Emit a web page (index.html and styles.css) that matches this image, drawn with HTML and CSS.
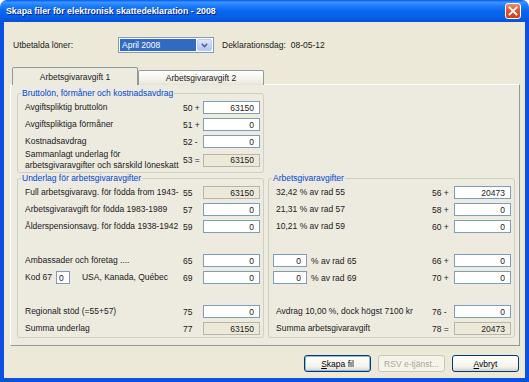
FILE: index.html
```html
<!DOCTYPE html>
<html lang="sv">
<head>
    <meta charset="UTF-8">
    <meta name="viewport" content="width=device-width, initial-scale=1.0">
    <title>Skapa filer för elektronisk skattedeklaration - 2008</title>
    <link rel="stylesheet" href="styles.css">
</head>
<body>
    <div class="window">
        <div class="titlebar">
            <span class="title">Skapa filer för elektronisk skattedeklaration - 2008</span>
            <button class="close">
                <svg width="10" height="10" viewBox="0 0 10 10"><path d="M1.5 1.5 L8.5 8.5 M8.5 1.5 L1.5 8.5" stroke="#fff" stroke-width="1.8" stroke-linecap="square"/></svg>
            </button>
        </div>

        <div class="client">
            <div class="toprow">
                <span class="top-label">Utbetalda löner:</span>
                <div class="combo">
                    <span class="combo-value">April 2008</span>
                    <span class="combo-arrow">
                        <svg width="7" height="5" viewBox="0 0 7 5"><path d="M0.8 0.8 L3.5 3.6 L6.2 0.8" fill="none" stroke="#4d6185" stroke-width="1.5"/></svg>
                    </span>
                </div>
                <span class="decl">Deklarationsdag:</span>
                <span class="decl-date">08-05-12</span>
            </div>

            <div class="tabs">
                <div class="tab active">Arbetsgivaravgift 1</div>
                <div class="tab">Arbetsgivaravgift 2</div>
            </div>

            <div class="panel">
                <fieldset class="group group-top">
                    <legend>Bruttolön, förmåner och kostnadsavdrag</legend>
                    <div class="row"><span class="lbl">Avgiftspliktig bruttolön</span><span class="num">50 +</span><input class="field" value="63150"></div>
                    <div class="row"><span class="lbl">Avgiftspliktiga förmåner</span><span class="num">51 +</span><input class="field" value="0"></div>
                    <div class="row"><span class="lbl">Kostnadsavdrag</span><span class="num">52 -</span><input class="field" value="0"></div>
                    <div class="row tall"><span class="lbl">Sammanlagt underlag för<br>arbetsgivaravgifter och särskild löneskatt</span><span class="num">53 =</span><input class="field readonly" value="63150" readonly></div>
                </fieldset>

                <fieldset class="group group-left">
                    <legend>Underlag för arbetsgivaravgifter</legend>
                    <div class="row"><span class="lbl">Full arbetsgivaravg. för födda from 1943-</span><span class="num">55</span><input class="field readonly" value="63150" readonly></div>
                    <div class="row"><span class="lbl">Arbetsgivaravgift för födda 1983-1989</span><span class="num">57</span><input class="field" value="0"></div>
                    <div class="row"><span class="lbl">Ålderspensionsavg. för födda 1938-1942</span><span class="num">59</span><input class="field" value="0"></div>
                    <div class="row"></div>
                    <div class="row"><span class="lbl">Ambassader och företag ....</span><span class="num">65</span><input class="field" value="0"></div>
                    <div class="row"><span class="lbl">Kod 67<input class="kod" value="0"><span class="kod-text">USA, Kanada, Québec</span></span><span class="num">69</span><input class="field" value="0"></div>
                    <div class="row"></div>
                    <div class="row"><span class="lbl">Regionalt stöd (=55+57)</span><span class="num">75</span><input class="field" value="0"></div>
                    <div class="row"><span class="lbl">Summa underlag</span><span class="num">77</span><input class="field readonly" value="63150" readonly></div>
                </fieldset>

                <fieldset class="group group-right">
                    <legend>Arbetsgivaravgifter</legend>
                    <div class="row"><span class="lbl">32,42 % av rad 55</span><span class="num">56 +</span><input class="field" value="20473"></div>
                    <div class="row"><span class="lbl">21,31 % av rad 57</span><span class="num">58 +</span><input class="field" value="0"></div>
                    <div class="row"><span class="lbl">10,21 % av rad 59</span><span class="num">60 +</span><input class="field" value="0"></div>
                    <div class="row"></div>
                    <div class="row"><span class="pct"><input class="pct-field" value="0">% av rad 65</span><span class="num">66 +</span><input class="field" value="0"></div>
                    <div class="row"><span class="pct"><input class="pct-field" value="0">% av rad 69</span><span class="num">70 +</span><input class="field" value="0"></div>
                    <div class="row"></div>
                    <div class="row"><span class="lbl">Avdrag 10,00 %, dock högst 7100 kr</span><span class="num">76 -</span><input class="field" value="0"></div>
                    <div class="row"><span class="lbl">Summa arbetsgivaravgift</span><span class="num">78 =</span><input class="field readonly" value="20473" readonly></div>
                </fieldset>
            </div>

            <div class="buttons">
                <button class="btn default"><u>S</u>kapa fil</button>
                <button class="btn" disabled>RSV e-tjänst...</button>
                <button class="btn"><u>A</u>vbryt</button>
            </div>
        </div>
    </div>
</body>
</html>
```

FILE: styles.css
```css
* {
    box-sizing: border-box;
}

body {
    margin: 0;
    font-family: "Liberation Sans", Arial, sans-serif;
    font-size: 8.5px;
    color: #1a1a1a;
    background: #fff;
}

.window {
    width: 529px;
    height: 382px;
    display: flex;
    flex-direction: column;
}

/* title bar */
.titlebar {
    height: 22px;
    flex: none;
    display: flex;
    align-items: center;
    justify-content: space-between;
    padding: 0 8px 0 6px;
    border-radius: 7px 7px 0 0;
    background: linear-gradient(to bottom, #0058ee 0%, #3d95ff 10%, #1d7ffc 25%, #0a66ef 50%, #0560ea 75%, #0a4fd8 100%);
}

.title {
    color: #fff;
    font-weight: bold;
    font-size: 8.8px;
    text-shadow: 1px 1px #0a1883;
}

.close {
    width: 16px;
    height: 16px;
    padding: 0;
    display: flex;
    align-items: center;
    justify-content: center;
    border: 1px solid #fff;
    border-radius: 3px;
    background: linear-gradient(to bottom, #ec8e6e, #e2552f 45%, #c9401b);
}

/* dialog client area */
.client {
    flex: 1;
    background: #ece9d8;
    border: 4px solid #0d4fe3;
    border-top: 0;
    padding: 15px 5px 0 6px;
}

.toprow {
    height: 16px;
    display: flex;
    align-items: center;
    padding-left: 3px;
}

.top-label {
    width: 105px;
}

.combo {
    width: 96px;
    height: 16px;
    display: flex;
    border: 1px solid #7f9db9;
    background: #fff;
    padding: 1px;
}

.combo-value {
    flex: 1;
    background: #316ac5;
    color: #fff;
    padding-left: 2px;
    line-height: 12px;
}

.combo-arrow {
    width: 15px;
    margin-left: 1px;
    display: flex;
    align-items: center;
    justify-content: center;
    border: 1px solid #b9cbf3;
    border-radius: 2px;
    background: linear-gradient(to bottom, #dce7fd, #c1d3fb 60%, #b1c5f4);
}

.decl {
    margin-left: 8px;
}

.decl-date {
    margin-left: 5px;
}

/* tabs */
.tabs {
    height: 18px;
    margin-top: 14px;
    margin-bottom: -1px;
    padding-left: 2px;
    display: flex;
    align-items: flex-end;
}

.tab {
    width: 126px;
    height: 15px;
    display: flex;
    align-items: center;
    justify-content: center;
    border: 1px solid #919b9c;
    border-bottom: 0;
    border-radius: 2px 2px 0 0;
    background: linear-gradient(to bottom, #fff, #f0efe8 70%, #e6e4da);
}

.tab.active {
    height: 18px;
    position: relative;
    z-index: 1;
    background: #edeae0;
}

.panel {
    display: grid;
    grid-template-columns: 247px 247px;
    grid-template-rows: auto auto;
    column-gap: 4px;
    padding: 3px 4px 7px 6px;
    background: #edeae0;
    border: 1px solid;
    border-color: #fff #919b9c #919b9c #fff;
}

.group-top {
    grid-column: 1;
    grid-row: 1;
}

.group-left {
    grid-column: 1;
    grid-row: 2;
}

.group-right {
    grid-column: 2;
    grid-row: 2;
}

.group {
    margin: 0;
    min-width: 0;
    padding: 1px 3px 0 4px;
    border: 1px solid #d0d0bf;
    border-radius: 3px;
}

.group-top {
    padding-bottom: 1px;
}

.group legend {
    padding: 0 1px;
    margin-left: -1px;
    line-height: 10px;
    color: #0046d5;
}

.row {
    height: 17px;
    display: grid;
    grid-template-columns: 1fr 20px 57px;
    align-items: center;
}

.group-right .row {
    grid-template-columns: 1fr 22px 57px;
}

.row.tall {
    height: 22px;
    margin-top: -1px;
}

.lbl {
    padding-left: 3px;
    line-height: 11px;
    white-space: nowrap;
    display: flex;
    align-items: center;
}

.row.tall .lbl {
    display: block;
}

.num {
    white-space: nowrap;
}

input {
    font-family: inherit;
    font-size: 8.5px;
    color: #1a1a1a;
    margin: 0;
    outline: none;
}

.field {
    width: 57px;
    height: 13px;
    padding: 0 5px 0 0;
    text-align: right;
    border: 1px solid #7f9db9;
    background: #fff;
}

.field.readonly {
    border-color: #b8b6ab;
    background: #ece9d8;
}

.kod {
    width: 14px;
    height: 13px;
    margin-left: 4px;
    padding: 0 0 0 2px;
    border: 1px solid #7f9db9;
    background: #fff;
}

.kod-text {
    margin-left: 12px;
}

.pct {
    display: flex;
    align-items: center;
    white-space: nowrap;
}

.pct-field {
    width: 34px;
    height: 13px;
    margin-right: 4px;
    padding: 0 5px 0 0;
    text-align: right;
    border: 1px solid #7f9db9;
    background: #fff;
}

/* buttons */
.buttons {
    display: flex;
    justify-content: flex-end;
    gap: 7px;
    margin-top: 9px;
    margin-right: 1px;
}

.btn {
    width: 67px;
    height: 17px;
    padding: 0;
    font-family: inherit;
    font-size: 8.5px;
    color: #000;
    border: 1px solid #003c74;
    border-radius: 3px;
    background: linear-gradient(to bottom, #fff, #f4f3ee 70%, #d8d3c8);
}

.btn.default {
    box-shadow: inset 0 0 0 1px #98b8ea;
}

.btn:disabled {
    color: #aca899;
    border-color: #c9c7ba;
    background: #f5f4ea;
}
```
